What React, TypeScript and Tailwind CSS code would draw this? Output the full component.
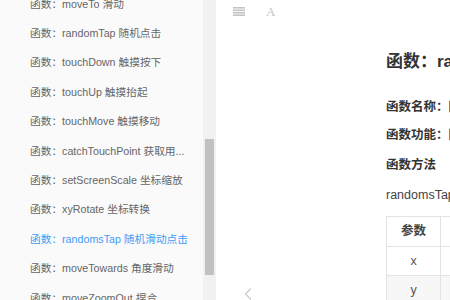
import { ChevronLeft } from "lucide-react";

const items = [
  { text: "函数：moveTo 滑动" },
  { text: "函数：randomTap 随机点击" },
  { text: "函数：touchDown 触摸按下" },
  { text: "函数：touchUp 触摸抬起" },
  { text: "函数：touchMove 触摸移动" },
  { text: "函数：catchTouchPoint 获取用..." },
  { text: "函数：setScreenScale 坐标缩放" },
  { text: "函数：xyRotate 坐标转换" },
  { text: "函数：randomsTap 随机滑动点击", active: true },
  { text: "函数：moveTowards 角度滑动" },
  { text: "函数：moveZoomOut 捏合" },
];

const font = {
  fontFamily:
    '"Liberation Sans", Arial, "Noto Sans CJK SC", sans-serif',
};

export default function App() {
  return (
    <div className="w-[450px] h-[300px] flex overflow-hidden bg-white" style={font}>
      {/* sidebar */}
      <div className="w-[203px] h-full bg-[#fafafa] overflow-hidden">
        <ul className="-mt-[11px]">
          {items.map((it) => (
            <li
              key={it.text}
              className={`h-[29.4px] flex items-center pl-[30px] text-[10.7px] whitespace-nowrap ${
                it.active ? "text-[#3f9bf7]" : "text-[#666]"
              }`}
            >
              {it.text}
            </li>
          ))}
        </ul>
      </div>

      {/* scrollbar */}
      <div className="w-[13px] h-full bg-[#f1f1f1] flex flex-col">
        <div className="h-[139px]" />
        <div className="mx-[2px] h-[136px] bg-[#c1c1c1]" />
      </div>

      {/* main */}
      <div className="flex-1 h-full relative overflow-hidden">
        <div className="flex items-center gap-[21px] pl-[17px] pt-[3px] h-[17px] box-content">
          <svg width="12" height="9" viewBox="0 0 12 9" className="text-[#c4c4c4]">
            <rect x="0" y="0" width="12" height="1.6" fill="currentColor" />
            <rect x="0" y="2.5" width="12" height="1.6" fill="currentColor" />
            <rect x="0" y="5" width="12" height="1.6" fill="currentColor" />
            <rect x="0" y="7.4" width="12" height="1.6" fill="currentColor" />
          </svg>
          <span
            className="text-[13px] text-[#c4c4c4] leading-none"
            style={{ fontFamily: '"Liberation Serif", serif' }}
          >
            A
          </span>
        </div>

        <div className="pl-[170px] pt-[31px] whitespace-nowrap text-[#333]">
          <h1 className="text-[17px] font-bold leading-[22px]">函数：randomsTap 随机滑动点击</h1>
          <p className="mt-[26px] text-[12.5px] font-bold leading-[16px]">函数名称：随机滑动点击</p>
          <p className="mt-[12px] text-[12.5px] font-bold leading-[16px]">函数功能：随机滑动点击</p>
          <p className="mt-[14px] text-[12.5px] font-bold leading-[16px]">函数方法</p>
          <p className="mt-[14px] text-[12.5px] leading-[16px] text-[#444]">
            randomsTap(x, y, r)
          </p>
          <table className="mt-[13px] border-collapse table-fixed w-[174px] text-[12.5px]">
            <tbody>
              <tr className="h-[30px] bg-white">
                <th className="w-[54px] border border-[#e3e3e3] font-bold text-[#444]">参数</th>
                <th className="w-[120px] border border-[#e3e3e3] font-bold text-[#444]">类型</th>
              </tr>
              <tr className="h-[29px] bg-white">
                <td className="border border-[#e3e3e3] text-center text-[#555]">x</td>
                <td className="border border-[#e3e3e3] text-center text-[#555]">number</td>
              </tr>
              <tr className="h-[29px] bg-[#f7f7f7]">
                <td className="border border-[#e3e3e3] text-center text-[#555]">y</td>
                <td className="border border-[#e3e3e3] text-center text-[#555]">number</td>
              </tr>
            </tbody>
          </table>
        </div>

        <ChevronLeft
          className="absolute left-[22px] top-[284px] text-[#ccc]"
          size={20}
          strokeWidth={1.5}
        />
      </div>
    </div>
  );
}
